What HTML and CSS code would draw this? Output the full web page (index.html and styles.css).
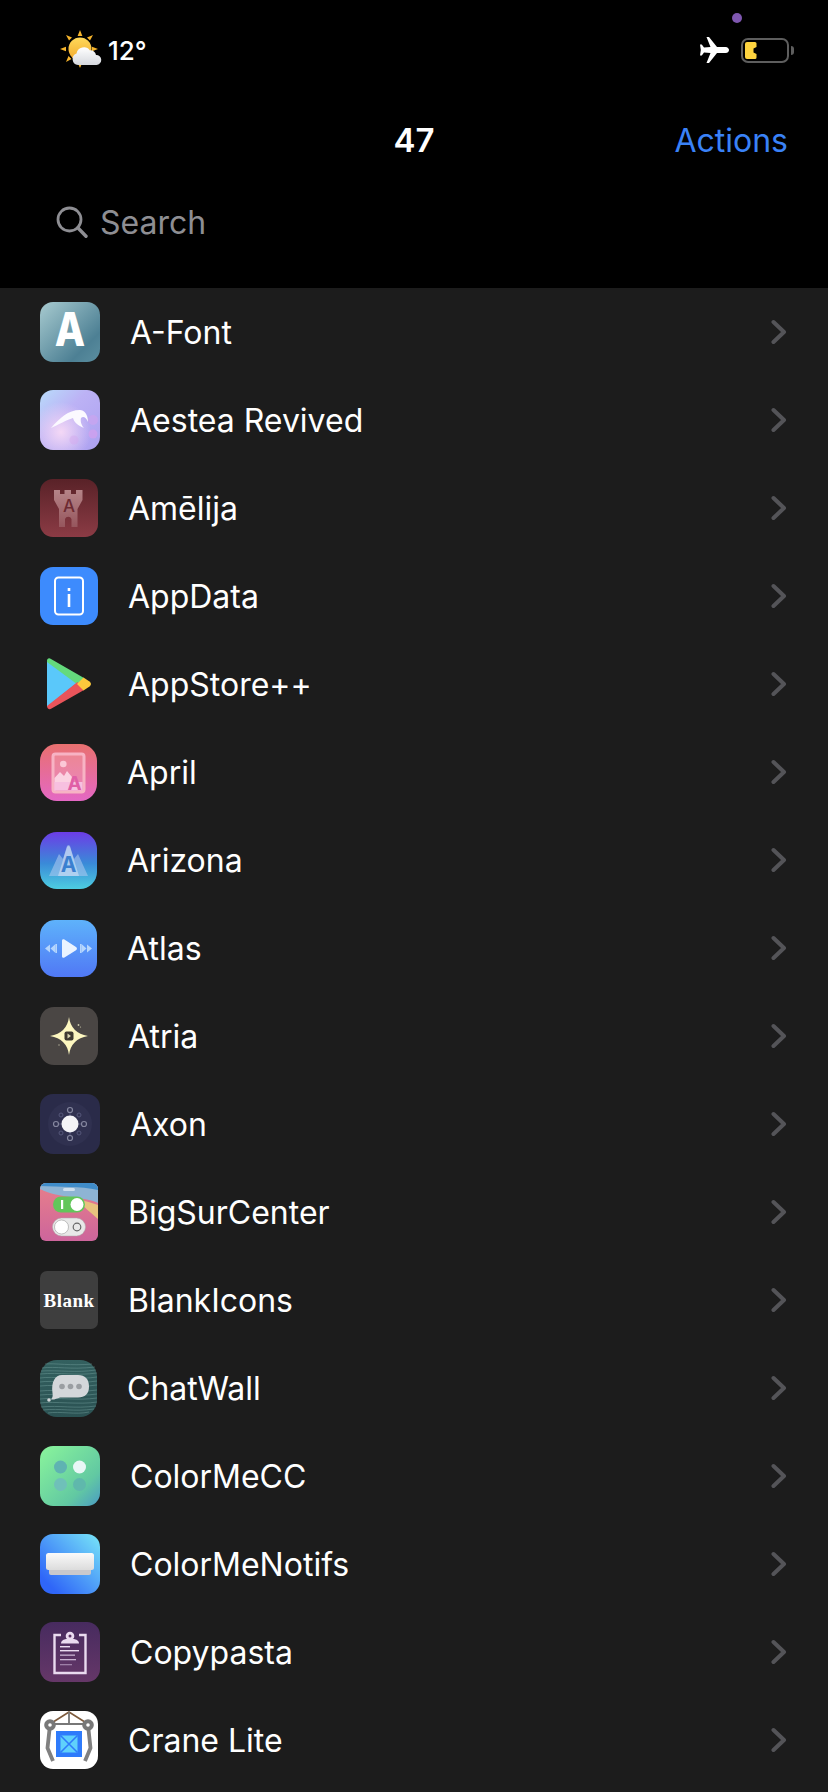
FILE: index.html
```html
<!DOCTYPE html>
<html lang="en">
<head>
<meta charset="utf-8">
<title>47</title>
<link rel="stylesheet" href="styles.css">
</head>
<body>
<header class="top">
  <span class="cam-dot"></span>
  <div class="status">
    <div class="status-left">
      <svg class="weather" viewBox="0 0 42 42" width="42" height="42">
        <defs>
          <linearGradient id="sun" x1="0" y1="0" x2="0" y2="1"><stop offset="0" stop-color="#ffd95a"/><stop offset="1" stop-color="#f2a92c"/></linearGradient>
          <linearGradient id="cloud" x1="0" y1="0" x2="0" y2="1"><stop offset="0" stop-color="#ffffff"/><stop offset="1" stop-color="#d5d8de"/></linearGradient>
        </defs>
        <g fill="#f7b52c">
          <path d="M20 1l2.400 6h-4.800z"/><path d="M6 6l6 2.500-3 3z"/><path d="M33 6l-6 2.500 3 3z"/><path d="M0 20l6-2.200v4.400z"/><path d="M6 33l2.500-6 3 3z"/><path d="M20 39l-2.400-5.500h4.800z"/><path d="M38 20l-6-2.200v4.400z"/>
        </g>
        <circle cx="20" cy="20" r="11.500" fill="url(#sun)"/>
        <path d="M18 36a6 6 0 0 1-1.500-11.600 7.500 7.500 0 0 1 13.500-3 5.500 5.500 0 0 1 6 4.600 5 5 0 0 1 .5 10z" fill="url(#cloud)"/>
      </svg>
      <span class="temp">12°</span>
    </div>
    <div class="status-right">
      <svg class="plane" viewBox="0 0 29 26" width="29" height="26"><path fill="#fff" d="M6.500 0 L9 0 L17 10 L25.500 10 C28 10 29 12 29 13 C29 14 28 16 25.500 16 L17 16 L9 26 L6.500 26 L10.500 16 L4 15.500 L1.800 18.500 L0 18.500 L.8 13 L0 7.500 L1.800 7.500 L4 10.500 L10.500 10z"/></svg>
      <div class="battery">
        <div class="battery-body">
          <svg viewBox="0 0 12 17" width="12" height="17"><path fill="#fdd33f" d="M2 0h8a1.500 1.500 0 0 1 1.500 1.500V5L8.500 6.500v4l3 1.500v3.500A1.500 1.500 0 0 1 10 17H2a2 2 0 0 1-2-2V2a2 2 0 0 1 2-2z"/></svg>
        </div>
        <span class="battery-cap"></span>
      </div>
    </div>
  </div>
  <div class="nav">
    <span class="nav-side"></span>
    <span class="nav-title">47</span>
    <span class="nav-side nav-action">Actions</span>
  </div>
  <div class="search">
    <svg viewBox="0 0 32 32" width="32" height="32"><circle cx="13.500" cy="13.500" r="11.500" fill="none" stroke="#8e8e93" stroke-width="2.800"/><path d="M21.800 21.800L30 30.200" stroke="#8e8e93" stroke-width="3.400" stroke-linecap="round"/></svg>
    <span class="search-text">Search</span>
  </div>
</header>

<main class="list">
  <div class="row"><svg class="icon s60" viewBox="0 0 60 60">
    <defs><linearGradient id="g1" x1="0" y1="0" x2="1" y2="1"><stop offset="0" stop-color="#a8cbd0"/><stop offset=".75" stop-color="#4d8094"/><stop offset="1" stop-color="#5b8ea0"/></linearGradient></defs>
    <rect width="60" height="60" rx="13" fill="url(#g1)"/>
    <text transform="translate(30 44) scale(.84 1)" class="t-afont">A</text></svg>
    <span class="label">A-Font</span><svg class="chev" viewBox="0 0 16 26"><path d="M2.500 3L13 13 2.500 23"/></svg></div>

  <div class="row"><svg class="icon s60" viewBox="0 0 60 60">
    <defs><linearGradient id="g2" x1="0" y1="0" x2="1" y2="1"><stop offset="0" stop-color="#b8dcfb"/><stop offset=".4" stop-color="#bcb2f5"/><stop offset="1" stop-color="#aca0f0"/></linearGradient>
    <radialGradient id="g2b" cx=".35" cy=".7" r=".5"><stop offset="0" stop-color="#f4d8f6"/><stop offset="1" stop-color="#f4d8f6" stop-opacity="0"/></radialGradient></defs>
    <rect width="60" height="60" rx="13" fill="url(#g2)"/><rect width="60" height="60" rx="13" fill="url(#g2b)"/>
    <circle cx="53" cy="30" r="5" fill="#cfa4ee" opacity=".6"/><circle cx="53" cy="44" r="4.500" fill="#d4a0ee" opacity=".7"/><circle cx="34" cy="50" r="4.500" fill="#d4a9ee" opacity=".5"/>
    <path d="M11 38C20 28 28 20 40 20C44 20 48 24 48 32C46 27 43 26 41 28C40 32 42 36 44 38C36 35 34 31 33 28C26 30 18 35 11 38z" fill="#fbf9ff"/></svg>
    <span class="label">Aestea Revived</span><svg class="chev" viewBox="0 0 16 26"><path d="M2.500 3L13 13 2.500 23"/></svg></div>

  <div class="row"><svg class="icon s58" viewBox="0 0 58 58">
    <defs><linearGradient id="g3" x1="0" y1="0" x2="0" y2="1"><stop offset="0" stop-color="#592228"/><stop offset="1" stop-color="#8b3b45"/></linearGradient>
    <linearGradient id="g3b" x1="0" y1="0" x2="0" y2="1"><stop offset="0" stop-color="#b58488"/><stop offset="1" stop-color="#96565d"/></linearGradient></defs>
    <rect width="58" height="58" rx="13" fill="url(#g3)"/>
    <path d="M14 11h6v4h4.500v-4h6.500v4h5v-4h6.500v10l-5 9v18h-6V40a3.500 3.500 0 0 0-6.500 0v8h-6V30l-5-9z" fill="url(#g3b)"/>
    <text x="29" y="33" class="t-amelija">A</text></svg>
    <span class="label">Amēlija</span><svg class="chev" viewBox="0 0 16 26"><path d="M2.500 3L13 13 2.500 23"/></svg></div>

  <div class="row"><svg class="icon s58" viewBox="0 0 58 58">
    <rect width="58" height="58" rx="13" fill="#3d8bfd"/>
    <rect x="15" y="10.500" width="28" height="37" rx="3.500" fill="none" stroke="#fff" stroke-width="2"/>
    <rect x="27.700" y="27" width="2.600" height="13" fill="#fff"/><rect x="27.700" y="21" width="2.600" height="3" fill="#fff"/></svg>
    <span class="label">AppData</span><svg class="chev" viewBox="0 0 16 26"><path d="M2.500 3L13 13 2.500 23"/></svg></div>

  <div class="row"><svg class="icon s58" viewBox="0 0 58 58">
    <path d="M7 5V52L37 28z" fill="#5ac8fa"/>
    <path d="M7 6C7 3.500 9 2.500 11 4L44 23 37.500 29.500 7 7z" fill="#64da7c"/>
    <path d="M7 51C7 54 9.500 55 11.500 53.500L44 35 37.500 27z" fill="#e9545a"/>
    <path d="M37 29L43.500 22.500 49.500 26.500C51.500 28 51.500 30 49.500 31.500L43.500 35.500z" fill="#fcc93c"/></svg>
    <span class="label">AppStore++</span><svg class="chev" viewBox="0 0 16 26"><path d="M2.500 3L13 13 2.500 23"/></svg></div>

  <div class="row"><svg class="icon s57" viewBox="0 0 57 57">
    <defs><linearGradient id="g6" x1="0" y1="0" x2="0" y2="1"><stop offset="0" stop-color="#e8706f"/><stop offset="1" stop-color="#e468c4"/></linearGradient></defs>
    <rect width="57" height="57" rx="17" fill="url(#g6)"/>
    <rect x="13" y="10" width="31" height="38" rx="2.500" fill="#f9bfc8" fill-opacity=".3" stroke="#f7b3c4" stroke-width="3"/>
    <circle cx="23.300" cy="20" r="3.300" fill="#fbc8d6"/>
    <path d="M14.500 41V34L20 28 24 32 27 27 32 33 30 42 14.500 46.500z" fill="#fbd2e2"/>
    <rect x="14.500" y="38" width="28" height="8.500" fill="#f7c0e0"/>
    <text x="34.500" y="46" class="t-april">A</text></svg>
    <span class="label">April</span><svg class="chev" viewBox="0 0 16 26"><path d="M2.500 3L13 13 2.500 23"/></svg></div>

  <div class="row"><svg class="icon s57" viewBox="0 0 57 57">
    <defs><linearGradient id="g7" x1="0" y1="0" x2="0" y2="1"><stop offset="0" stop-color="#6c3ce6"/><stop offset=".55" stop-color="#3a8ad8"/><stop offset="1" stop-color="#4dcde0"/></linearGradient></defs>
    <rect width="57" height="57" rx="17" fill="url(#g7)"/>
    <path d="M9 44L19 22 23 27 27 14Q28.500 12 30 14L34 27 38 22 48 44z" fill="#a9c6ee" fill-opacity=".6" stroke-linejoin="round"/>
    <path d="M18 44L27 15Q28.500 13 30 15L39 44z" fill="#c9dcf4" fill-opacity=".65"/>
    <text x="28.500" y="40" class="t-arizona">A</text></svg>
    <span class="label">Arizona</span><svg class="chev" viewBox="0 0 16 26"><path d="M2.500 3L13 13 2.500 23"/></svg></div>

  <div class="row"><svg class="icon s57" viewBox="0 0 57 57">
    <defs><linearGradient id="g8" x1="0" y1="0" x2="0" y2="1"><stop offset="0" stop-color="#5eb2fb"/><stop offset="1" stop-color="#5078f5"/></linearGradient></defs>
    <rect width="57" height="57" rx="15" fill="url(#g8)"/>
    <path d="M22 20.500V36.500a1.500 1.500 0 0 0 2 1.200L36 30.300a2 2 0 0 0 0-3.400L24 19.300a1.500 1.500 0 0 0-2 1.200z" fill="#eaf3ff"/>
    <path d="M5 28.500L10 24.500V32.500zM10.500 28.500L15.500 24V33z" fill="#b5d6fd"/><rect x="15.500" y="24" width="1.500" height="9" fill="#b5d6fd"/>
    <path d="M52 28.500L47 24.500V32.500zM46.500 28.500L41.500 24V33z" fill="#b5d6fd"/><rect x="40" y="24" width="1.500" height="9" fill="#b5d6fd"/></svg>
    <span class="label">Atlas</span><svg class="chev" viewBox="0 0 16 26"><path d="M2.500 3L13 13 2.500 23"/></svg></div>

  <div class="row"><svg class="icon s58" viewBox="0 0 58 58">
    <rect width="58" height="58" rx="14" fill="#4a4644"/>
    <path d="M29 10Q31 26 48 29Q31 32 29 48Q27 32 10 29Q27 26 29 10z" fill="#fdf7c0"/>
    <rect x="24.500" y="24.500" width="9" height="9" rx="2" fill="#3f3a30"/><path d="M27.500 26.500L31 29 27.500 31.500z" fill="#d8d4b0"/>
    <circle cx="38.500" cy="18" r=".9" fill="#c8c4a8"/><circle cx="40.500" cy="20" r=".6" fill="#c8c4a8"/><circle cx="19" cy="38" r=".8" fill="#a8a490"/></svg>
    <span class="label">Atria</span><svg class="chev" viewBox="0 0 16 26"><path d="M2.500 3L13 13 2.500 23"/></svg></div>

  <div class="row"><svg class="icon s60" viewBox="0 0 60 60">
    <rect width="60" height="60" rx="13" fill="#2a2b49"/>
    <circle cx="30" cy="30" r="22" fill="#303150"/>
    <path d="M30 18.500V41.500M18.500 30H41.500" stroke="#55577a" stroke-width="1"/>
    <g fill="#303150" stroke="#85879f" stroke-width="1.200"><circle cx="30" cy="16" r="2.500"/><circle cx="30" cy="44" r="2.500"/><circle cx="16" cy="30" r="2.500"/><circle cx="44" cy="30" r="2.500"/></g>
    <g fill="none" stroke="#55577a" stroke-width="1"><circle cx="21" cy="21" r="2"/><circle cx="39" cy="21" r="2"/><circle cx="21" cy="39" r="2"/><circle cx="39" cy="39" r="2"/></g>
    <circle cx="30" cy="30" r="8.500" fill="#f3f3f6"/></svg>
    <span class="label">Axon</span><svg class="chev" viewBox="0 0 16 26"><path d="M2.500 3L13 13 2.500 23"/></svg></div>

  <div class="row"><svg class="icon s58" viewBox="0 0 58 58">
    <defs><linearGradient id="g11" x1="0" y1="0" x2="0" y2="1"><stop offset="0" stop-color="#e87f8a"/><stop offset="1" stop-color="#cd659c"/></linearGradient>
    <clipPath id="c11"><rect width="58" height="58" rx="6"/></clipPath></defs>
    <g clip-path="url(#c11)"><rect width="58" height="58" fill="url(#g11)"/>
    <path d="M0 0H58V20C44 13 20 16 0 6z" fill="#8eb4d4"/>
    <path d="M0 0H58V7C40 3 20 4 0 3z" fill="#3f8cc9"/>
    <path d="M36 16C46 18 52 20 58 22V36C50 29 44 24 36 16z" fill="#e8c27e"/></g>
    <rect x="23" y="5" width="12" height="3" rx="1.500" fill="#cfe0ee"/>
    <rect x="13" y="13.500" width="32" height="16" rx="8" fill="#62c65a"/>
    <rect x="21" y="17" width="2.200" height="9" fill="#fff"/><circle cx="37" cy="21.500" r="6.500" fill="#fff"/>
    <rect x="12.500" y="35" width="33" height="18" rx="9" fill="#e8e8e8" stroke="#aaa" stroke-width=".5"/>
    <circle cx="21.500" cy="44" r="7" fill="#fff" stroke="#999" stroke-width=".6"/><circle cx="37" cy="44" r="3.800" fill="none" stroke="#666" stroke-width="1.200"/></svg>
    <span class="label">BigSurCenter</span><svg class="chev" viewBox="0 0 16 26"><path d="M2.500 3L13 13 2.500 23"/></svg></div>

  <div class="row"><svg class="icon s58" viewBox="0 0 58 58">
    <rect width="58" height="58" rx="7" fill="#3e3e3e"/>
    <text x="29" y="35.500" class="t-blank">Blank</text></svg>
    <span class="label">BlankIcons</span><svg class="chev" viewBox="0 0 16 26"><path d="M2.500 3L13 13 2.500 23"/></svg></div>

  <div class="row"><svg class="icon s57" viewBox="0 0 57 57">
    <defs><linearGradient id="g13" x1="0" y1="0" x2="0" y2="1"><stop offset="0" stop-color="#33605f"/><stop offset="1" stop-color="#2b5253"/></linearGradient></defs>
    <rect width="57" height="57" rx="17" fill="url(#g13)"/>
    <g stroke="#7aa6a4" stroke-width=".7" opacity=".6" fill="none"><path d="M5 4C16 3 30 6 52 4"/><path d="M2 8C16 6 30 10 55 7"/><path d="M1 11C20 10 36 13 56 10"/><path d="M0 14C20 12 36 16 57 13"/><path d="M0 18C12 16 40 20 57 17"/><path d="M0 22C12 20 40 24 57 21"/><path d="M0 26C20 24 36 28 57 25"/><path d="M0 31C20 29 36 33 57 30"/><path d="M0 35C20 33 36 37 57 34"/><path d="M0 39C20 37 36 41 57 38"/><path d="M0 43C14 41 40 45 57 42"/><path d="M1 47C20 45 34 49 56 46"/><path d="M3 50C20 48 34 52 54 49"/><path d="M8 53C20 51 36 55 49 52"/></g>
    <path d="M22 15H38C45 15 49 19 49 26.500C49 34 45 37.500 38 37.500H20C17 38.500 14 40 11 39.500C12.500 38 13 36 12.500 33C11 22 15 15 22 15z" fill="#d4d7da"/>
    <circle cx="22" cy="26.500" r="2.800" fill="#9a9ea2"/><circle cx="30.500" cy="26.500" r="2.800" fill="#9a9ea2"/><circle cx="39" cy="26.500" r="2.800" fill="#9a9ea2"/>
    <circle cx="9" cy="40" r="1.800" fill="#d4d7da"/></svg>
    <span class="label">ChatWall</span><svg class="chev" viewBox="0 0 16 26"><path d="M2.500 3L13 13 2.500 23"/></svg></div>

  <div class="row"><svg class="icon s60" viewBox="0 0 60 60">
    <defs><linearGradient id="g14" x1="0" y1="0" x2="1" y2="1"><stop offset="0" stop-color="#8af59b"/><stop offset=".7" stop-color="#62c9a2"/><stop offset="1" stop-color="#4a9bc4"/></linearGradient></defs>
    <rect width="60" height="60" rx="13" fill="url(#g14)"/>
    <circle cx="20.500" cy="21" r="6.500" fill="#5fb3b2"/><circle cx="39.500" cy="21" r="6.500" fill="#e8f7f6"/><circle cx="20.500" cy="38.500" r="6.500" fill="#6fc0b9"/><circle cx="39.500" cy="38.500" r="6.500" fill="#5fb8ac"/></svg>
    <span class="label">ColorMeCC</span><svg class="chev" viewBox="0 0 16 26"><path d="M2.500 3L13 13 2.500 23"/></svg></div>

  <div class="row"><svg class="icon s60" viewBox="0 0 60 60">
    <defs><linearGradient id="g15" x1="1" y1="0" x2="0" y2="1"><stop offset="0" stop-color="#78e6f8"/><stop offset=".85" stop-color="#2f66f8"/></linearGradient>
    <linearGradient id="g15b" x1="0" y1="0" x2="0" y2="1"><stop offset="0" stop-color="#fafafa"/><stop offset="1" stop-color="#dcdcdc"/></linearGradient></defs>
    <rect width="60" height="60" rx="13" fill="url(#g15)"/>
    <rect x="9" y="30" width="42" height="11" rx="2" fill="#c9c9cc"/>
    <rect x="6" y="19" width="48" height="17" rx="2.500" fill="url(#g15b)"/></svg>
    <span class="label">ColorMeNotifs</span><svg class="chev" viewBox="0 0 16 26"><path d="M2.500 3L13 13 2.500 23"/></svg></div>

  <div class="row"><svg class="icon s60" viewBox="0 0 60 60">
    <defs><linearGradient id="g16" x1="0" y1="0" x2="0" y2="1"><stop offset="0" stop-color="#472b5f"/><stop offset="1" stop-color="#653768"/></linearGradient></defs>
    <rect width="60" height="60" rx="13" fill="url(#g16)"/>
    <path d="M21 13H14.500V51H45.500V13H39" fill="none" stroke="#eadbf0" stroke-width="2.400"/>
    <circle cx="30" cy="14" r="4.300" fill="#eadbf0"/><circle cx="30" cy="14" r="1.500" fill="#5a3264"/>
    <path d="M21 21.500C21 18.500 24 17.500 26 17H34C36 17.500 39 18.500 39 21.500z" fill="#eadbf0"/>
    <g fill="#eadbf0"><rect x="20" y="24" width="10" height="1.400"/><rect x="20" y="28" width="19" height="1.400"/></g>
    <g fill="#c9b3d3"><rect x="20" y="32.500" width="15" height="1.300"/><rect x="20" y="37" width="16" height="1.300"/><rect x="20" y="42" width="12" height="1.300" opacity=".6"/></g></svg>
    <span class="label">Copypasta</span><svg class="chev" viewBox="0 0 16 26"><path d="M2.500 3L13 13 2.500 23"/></svg></div>

  <div class="row"><svg class="icon s58" viewBox="0 0 58 58">
    <rect width="58" height="58" rx="13" fill="#fff"/>
    <path d="M10 13L29 1 48 13" fill="none" stroke="#7d5a3c" stroke-width="1.600"/>
    <path d="M29 1V13M10 13H48" stroke="#777" stroke-width="1.800"/>
    <path d="M10 14L7.500 37 13 50M48 14L50.500 37 45 50" fill="none" stroke="#808080" stroke-width="3.800"/>
    <circle cx="10" cy="14" r="5.800" fill="#777"/><circle cx="10" cy="14" r="1.800" fill="#fff"/><circle cx="48" cy="14" r="5.800" fill="#777"/><circle cx="48" cy="14" r="1.800" fill="#fff"/>
    <rect x="16" y="20" width="26" height="26" fill="#2e7bfb"/>
    <path d="M20.500 24.500H37.500L29 33zM20.500 41.500H37.500L29 33zM20.500 24.500V41.500L29 33zM37.500 24.500V41.500L29 33z" fill="#5fd1fb"/>
    <path d="M20.500 24.500L37.500 41.500M37.500 24.500L20.500 41.500" stroke="#2e7bfb" stroke-width="1.600"/></svg>
    <span class="label">Crane Lite</span><svg class="chev" viewBox="0 0 16 26"><path d="M2.500 3L13 13 2.500 23"/></svg></div>
</main>
</body>
</html>
```
FILE: styles.css
```css
* { box-sizing: border-box; }
html, body { margin: 0; padding: 0; }
body {
  width: 828px;
  height: 1792px;
  overflow: hidden;
  background: #1c1c1c;
  color: #fff;
  font-family: Inter, "Liberation Sans", sans-serif;
}
.top {
  position: relative;
  height: 288px;
  background: #000;
  padding: 20px 0 0;
}
.cam-dot {
  position: absolute;
  left: 732px;
  top: 13px;
  width: 10px;
  height: 10px;
  border-radius: 50%;
  background: #7f57b0;
}
.status {
  height: 60px;
  display: flex;
  align-items: center;
  justify-content: space-between;
  padding: 0 34px 0 60px;
}
.status-left, .status-right { display: flex; align-items: center; }
.weather { display: block; }
.temp { font-size: 26px; font-weight: 500; margin-left: 6px; }
.status-right { gap: 12px; }
.plane { display: block; }
.battery { display: flex; align-items: center; gap: 2px; }
.battery-body {
  width: 48px;
  height: 25px;
  border: 2px solid #5e5e5e;
  border-radius: 7px;
  padding: 2px 0 0 2px;
}
.battery-body svg { display: block; }
.battery-cap {
  width: 3px;
  height: 9px;
  background: #5e5e5e;
  border-radius: 0 3px 3px 0;
}
.nav {
  height: 60px;
  margin-top: 30px;
  display: grid;
  grid-template-columns: 1fr auto 1fr;
  align-items: center;
  padding: 0 40px;
}
.nav-title { font-size: 33px; font-weight: 600; }
.nav-action { color: #3a82f7; font-size: 32px; text-align: right; }
.search {
  height: 60px;
  margin-top: 22px;
  display: flex;
  align-items: center;
  gap: 12px;
  padding-left: 56px;
}
.search svg { display: block; }
.search-text { font-size: 32px; color: #8e8e93; }
.list { display: flex; flex-direction: column; }
.row {
  height: 88px;
  display: flex;
  align-items: center;
  gap: 30px;
  padding: 0 41px 0 40px;
}
.icon { display: block; flex: none; overflow: visible; }
.s60 { width: 60px; height: 60px; }
.s58 { width: 58px; height: 58px; }
.s57 { width: 57px; height: 57px; }
.label { flex: 1; font-size: 32px; white-space: nowrap; }
.chev {
  display: block;
  flex: none;
  width: 16px;
  height: 26px;
  fill: none;
  stroke: #545458;
  stroke-width: 4;
  stroke-linecap: round;
  stroke-linejoin: round;
}
.t-afont { font: 800 47px Inter, sans-serif; fill: #fff; text-anchor: middle; }
.t-amelija { font: 500 17px Inter, sans-serif; fill: #6d2a32; text-anchor: middle; }
.t-april { font: 700 19px Inter, sans-serif; fill: #e05fa6; text-anchor: middle; }
.t-arizona { font: 700 21px Inter, sans-serif; fill: #3a7fd0; text-anchor: middle; }
.t-blank { font: 700 19px "Liberation Serif", serif; fill: #fff; text-anchor: middle; letter-spacing: .5px; }
```
